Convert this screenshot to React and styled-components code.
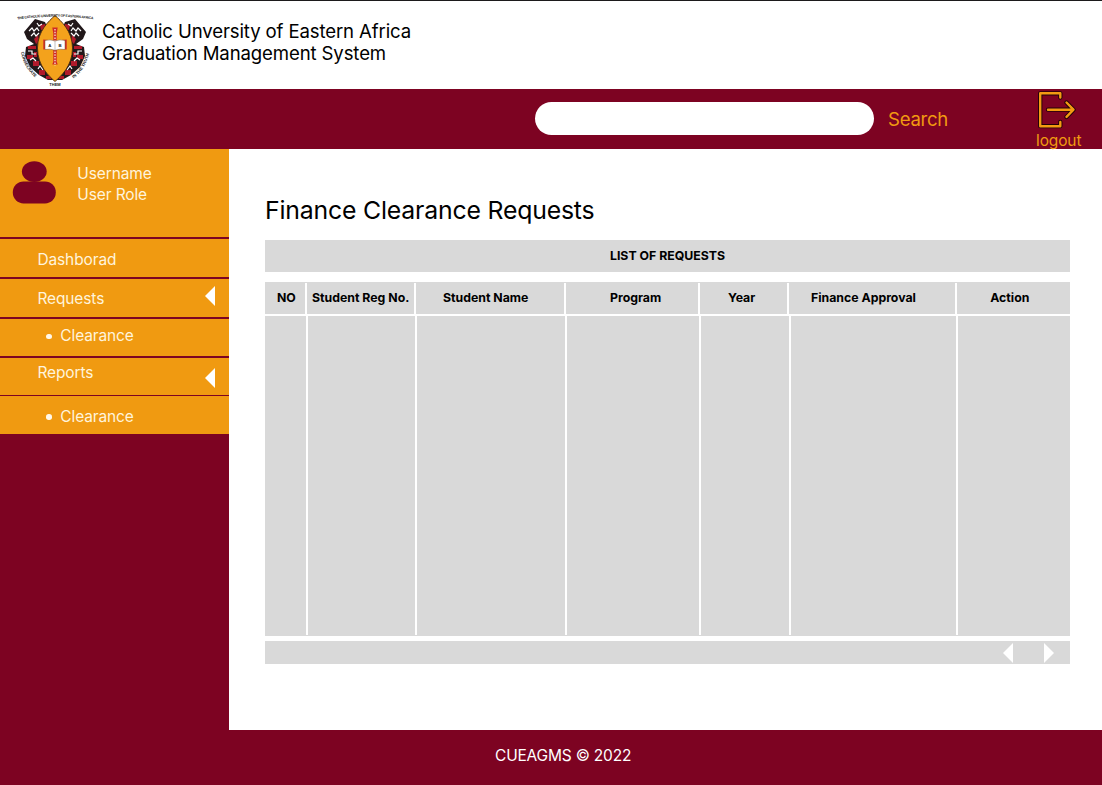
import React from "react";
import styled, { createGlobalStyle } from "styled-components";

const MAROON = "#7d0322";
const ORANGE = "#f09a11";
const GREY = "#d9d9d9";

const GlobalStyle = createGlobalStyle`
  * { box-sizing: border-box; }
  body { margin: 0; background: #fff; font-family: Inter, "Liberation Sans", sans-serif; font-weight: 400; color: #000; }
`;

const Page = styled.div`
  display: flex;
  flex-direction: column;
  width: 1102px;
  height: 785px;
  overflow: hidden;
  letter-spacing: -0.12px;
`;

const Header = styled.header`
  flex: none;
  display: flex;
  height: 88.6px;
  border-top: 1px solid #1c1a1b;
  padding: 11px 0 0 16px;
`;

const BrandTitle = styled.h1`
  margin: 8px 0 0 8px;
  font-weight: 400;
  font-size: 18.6px;
  line-height: 22.4px;
  letter-spacing: -0.13px;
  white-space: nowrap;
`;

const Navbar = styled.nav`
  flex: none;
  display: flex;
  height: 60.6px;
  background: ${MAROON};
  padding-left: 535px;
`;

const SearchInput = styled.input`
  width: 339px;
  height: 33px;
  margin-top: 13.6px;
  border: 0;
  border-radius: 17px;
  background: #fff;
  padding: 0 16px;
  outline: none;
`;

const SearchLabel = styled.span`
  margin: 19px 0 0 14px;
  width: 148px;
  font-size: 18.6px;
  line-height: 23px;
  letter-spacing: -0.28px;
  color: ${ORANGE};
`;

const Logout = styled.div`
  display: flex;
  flex-direction: column;
  padding-top: 2.6px;
  font-size: 15.5px;
  line-height: 19px;
  color: ${ORANGE};

  svg {
    flex: none;
  }
`;

const Main = styled.div`
  flex: none;
  display: flex;
  height: 580.8px;
`;

const Sidebar = styled.aside`
  width: 229px;
  background: ${MAROON};
  color: #fff4dc;
  font-size: 15.5px;
`;

const UserCard = styled.div`
  display: flex;
  height: 87.8px;
  background: ${ORANGE};
  padding: 11px 0 0 12px;
`;

const UserText = styled.div`
  margin: 2.6px 0 0 21.3px;
  line-height: 21.5px;
`;

const MenuItem = styled.div`
  display: flex;
  justify-content: space-between;
  height: ${(p) => p.$height}px;
  margin-top: ${(p) => p.$gap}px;
  padding: ${(p) => p.$top}px 14.5px 0 ${(p) => (p.$sub ? 46 : 37.4)}px;
  background: ${ORANGE};
  line-height: 20px;
`;

const ItemLabel = styled.span`
  display: flex;
  align-items: center;
  gap: 8.8px;
  height: 20px;
`;

const Bullet = styled.i`
  width: 5.5px;
  height: 5.5px;
  border-radius: 50%;
  background: #fff8ea;
`;

const Triangle = styled.svg`
  display: block;
  width: 10px;
  height: 20px;
  margin-top: ${(p) => p.$top || 0}px;
  fill: #fff;
`;

const Content = styled.main`
  flex: 1;
  padding: 44px 32px 0 36px;
`;

const PageTitle = styled.h2`
  margin: 0;
  height: 47px;
  font-weight: 400;
  font-size: 24.8px;
  line-height: 34px;
  letter-spacing: -0.18px;
  white-space: nowrap;
`;

const TableCaption = styled.div`
  height: 32px;
  background: ${GREY};
  font-weight: 700;
  font-size: 12.3px;
  line-height: 32px;
  letter-spacing: 0;
  text-align: center;
`;

const TableHead = styled.div`
  display: grid;
  grid-template-columns: 40px 107px 148px 132px 87px 166px 1fr;
  column-gap: 2px;
  height: 32px;
  margin-top: 10px;
  border-top: 1px solid ${GREY};
`;

const TableBody = styled.div`
  display: grid;
  grid-template-columns: 41px 107px 148px 132px 88px 165px 1fr;
  column-gap: 2px;
  height: 320px;
  margin-top: 2px;
  border-bottom: 1px solid ${GREY};
`;

const HeadCell = styled.div`
  background: ${GREY};
  padding-left: ${(p) => p.$indent}px;
  font-weight: 700;
  font-size: 12.3px;
  line-height: 30.5px;
  letter-spacing: 0;
  white-space: nowrap;
`;

const BodyCell = styled.div`
  background: ${GREY};
`;

const Pager = styled.div`
  display: flex;
  justify-content: flex-end;
  gap: 31px;
  height: 23px;
  margin-top: 5px;
  padding: 2px 16px 0 0;
  background: ${GREY};
`;

const Footer = styled.footer`
  flex: 1;
  background: ${MAROON};
  padding: 15.6px 0 0 495px;
  color: #fff;
  font-size: 15.5px;
  line-height: 20px;
  letter-spacing: -0.19px;
`;

function Crest() {
  return (
    <svg width="78" height="76" viewBox="0 0 78 76">
      <defs>
        <path id="arcTop" d="M1.5 7.5 Q39 2 77.5 7.5" />
        <path id="arcLeft" d="M5 40 Q7.5 56 21 67" />
        <path id="arcRight" d="M57.5 66.5 Q70 57 73.5 40" />
      </defs>
      <path
        d="M19 7L29 10L32 17H46L49 10L59 7L70 20L67 27L60 32L68 35L69 44L64 55L55 63L46 68H32L23 63L14 55L9 44L10 35L18 32L11 27L8 20Z"
        fill="#21181a"
      />
      <path
        d="M18 27l4-4 1 6-3 3zM60 27l-4-4-1 6 3 3zM12 34h8v3h-8zM58 34h8v3h-8zM11 43h6v4h-6zM61 43h6v4h-6zM17 49h6v5h-6zM55 49h6v5h-6zM23 58h6v5h-6zM49 58h6v5h-6zM24 13l5-1 1 5-5 1zM54 13l-5-1-1 5 5 1zM18 40h3v5h-3zM57 40h3v5h-3zM30 64h5v3h-5zM43 64h5v3h-5z"
        fill="#b01a2b"
      />
      <path
        d="M13 19l3-3 2 3 3-3 2 3M15 24l3-3 2 3 3-3M65 19l-3-3-2 3-3-3-2 3M63 24l-3-3-2 3-3-3M21 11l2 3 3-2M57 11l-2 3-3-2M12 39h4v3h4M66 39h-4v3h-4M14 48l3-2 3 3M64 48l-3-2-3 3M22 57l2-3 3 4M56 57l-2-3-3 4"
        fill="none"
        stroke="#fff"
        strokeWidth="1.2"
      />
      <path d="M39 3.5C33 9 21.5 19 21.5 36C21.5 54 33 64 39 69.5C45 64 56.5 54 56.5 36C56.5 19 45 9 39 3.5Z" fill="#f3a21c" stroke="#4a2a10" strokeWidth=".9" />
      <path d="M36.3 15.5h5.4l-1 6v7l10-1v10l-10-1v13l1 3h-5.4l1-3v-13l-10 1v-10l10 1v-7z" fill="#cf2a26" />
      <path d="M39 17v37" stroke="#fbe3d8" strokeWidth="1.3" strokeDasharray="1.5 1.3" />
      <path d="M29 28.5q5-1.5 10 .5q5-2 10-.5v9q-5-1-10 .8q-5-1.8-10-.8z" fill="#fff" stroke="#76552b" strokeWidth=".5" />
      <path d="M39 29v9" stroke="#999" strokeWidth=".6" />
      <g fontFamily="Liberation Sans, sans-serif" fontWeight="700" fill="#222" letterSpacing="0">
        <text x="32.3" y="35" fontSize="4.3">A</text>
        <text x="42.5" y="35" fontSize="4.3">B</text>
        <text fontSize="3.5" textLength="76"><textPath href="#arcTop">THE CATHOLIC UNIVERSITY OF EASTERN AFRICA</textPath></text>
        <text fontSize="4.3"><textPath href="#arcLeft">CONSECRATE</textPath></text>
        <text fontSize="4.3"><textPath href="#arcRight">IN THE TRUTH</textPath></text>
        <text x="39" y="73.5" fontSize="4" textAnchor="middle">THEM</text>
      </g>
    </svg>
  );
}

function LogoutIcon() {
  const shape = "M24.3 6.5V2.3H4.2V35.2H24.3V31M12 18.7H37M30.5 11.5L37.5 18.7L30.5 25.9";
  return (
    <svg width="40" height="40" viewBox="0 0 40 40" fill="none" strokeLinecap="round" strokeLinejoin="round">
      <path d={shape} stroke="#240207" strokeWidth="4.3" />
      <path d={shape} stroke="#f39a12" strokeWidth="2.4" />
    </svg>
  );
}

function UserIcon() {
  return (
    <svg width="44" height="44" viewBox="0 0 44 44" fill={MAROON}>
      <ellipse cx="22.3" cy="11.6" rx="12.4" ry="10.3" />
      <rect x="0.8" y="21.4" width="43" height="22" rx="10.8" />
    </svg>
  );
}

const Left = ({ top }) => (
  <Triangle $top={top} viewBox="0 0 10 20"><path d="M10 0V20L0 10Z" /></Triangle>
);
const Right = () => (
  <Triangle viewBox="0 0 10 20"><path d="M0 0V20L10 10Z" /></Triangle>
);

const menu = [
  { label: "Dashborad", height: 38.4, gap: 2, top: 11 },
  { label: "Requests", height: 37.8, gap: 1.6, top: 10, arrow: -2.6 },
  { label: "Clearance", height: 37.5, gap: 2, top: 7.5, sub: true },
  { label: "Reports", height: 37.2, gap: 1.8, top: 4.5, arrow: 5.5 },
  { label: "Clearance", height: 38, gap: 1, top: 10.6, sub: true },
];

const columns = [
  { label: "NO", indent: 12 },
  { label: "Student Reg No.", indent: 5 },
  { label: "Student Name", indent: 27 },
  { label: "Program", indent: 44 },
  { label: "Year", indent: 28 },
  { label: "Finance Approval", indent: 22 },
  { label: "Action", indent: 33.2 },
];

export default function App() {
  return (
    <Page>
      <GlobalStyle />
      <Header>
        <Crest />
        <BrandTitle>
          Catholic Unversity of Eastern Africa
          <br />
          Graduation Management System
        </BrandTitle>
      </Header>
      <Navbar>
        <SearchInput aria-label="Search" />
        <SearchLabel>Search</SearchLabel>
        <Logout>
          <LogoutIcon />
          logout
        </Logout>
      </Navbar>
      <Main>
        <Sidebar>
          <UserCard>
            <UserIcon />
            <UserText>
              Username
              <br />
              User Role
            </UserText>
          </UserCard>
          {menu.map((m, i) => (
            <MenuItem key={i} $height={m.height} $gap={m.gap} $top={m.top} $sub={m.sub}>
              <ItemLabel>
                {m.sub && <Bullet />}
                {m.label}
              </ItemLabel>
              {m.arrow !== undefined && <Left top={m.arrow} />}
            </MenuItem>
          ))}
        </Sidebar>
        <Content>
          <PageTitle>Finance Clearance Requests</PageTitle>
          <TableCaption>LIST OF REQUESTS</TableCaption>
          <TableHead>
            {columns.map((c) => (
              <HeadCell key={c.label} $indent={c.indent}>{c.label}</HeadCell>
            ))}
          </TableHead>
          <TableBody>
            {columns.map((c) => (
              <BodyCell key={c.label} />
            ))}
          </TableBody>
          <Pager>
            <Left />
            <Right />
          </Pager>
        </Content>
      </Main>
      <Footer>CUEAGMS © 2022</Footer>
    </Page>
  );
}
